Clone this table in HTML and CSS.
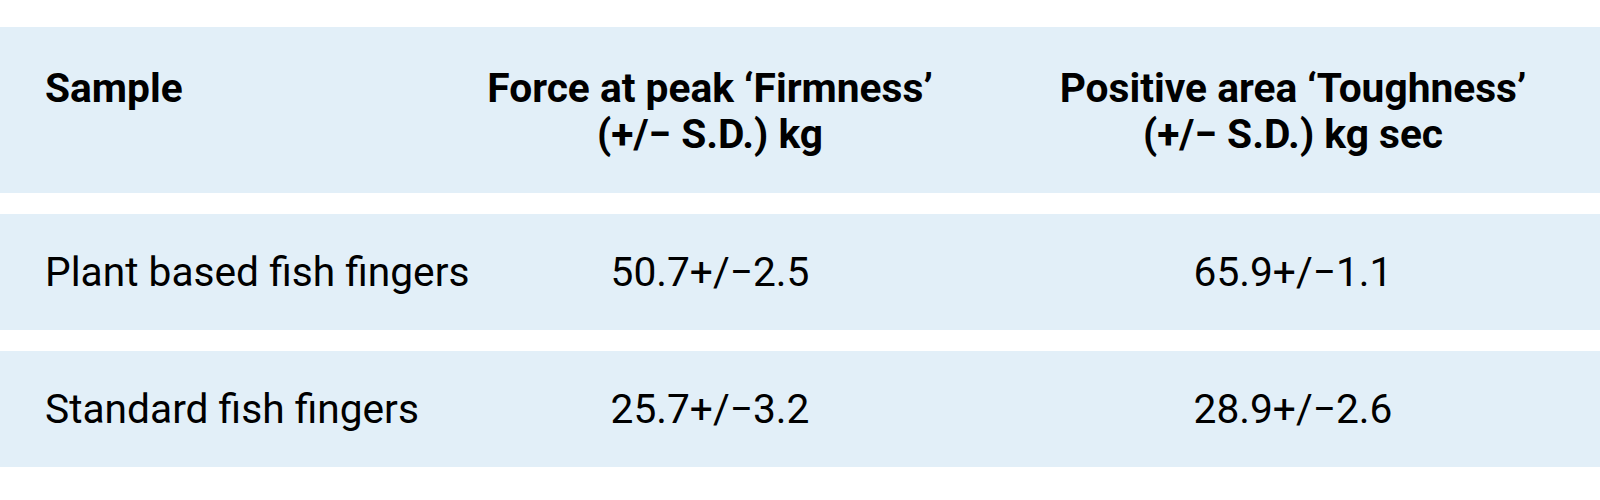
FILE: index.html
```html
<!DOCTYPE html>
<html lang="en">
<head>
<meta charset="utf-8">
<title>Texture analysis</title>
<link rel="stylesheet" href="styles.css">
</head>
<body>
<div class="table">
  <div class="row head">
    <div class="cell first">Sample</div>
    <div class="cell">Force at peak ‘Firmness’<br>(+/− S.D.) kg</div>
    <div class="cell">Positive area ‘Toughness’<br>(+/− S.D.) kg sec</div>
  </div>
  <div class="row body">
    <div class="cell first">Plant based fish fingers</div>
    <div class="cell">50.7+/−2.5</div>
    <div class="cell">65.9+/−1.1</div>
  </div>
  <div class="row body">
    <div class="cell first">Standard fish fingers</div>
    <div class="cell">25.7+/−3.2</div>
    <div class="cell">28.9+/−2.6</div>
  </div>
</div>
</body>
</html>
```

FILE: styles.css
```css
html, body {
  margin: 0;
  padding: 0;
  background: #ffffff;
}
body {
  padding-top: 27px;
  font-family: Roboto, "Liberation Sans", sans-serif;
  color: #000;
}
.table {
  display: flex;
  flex-direction: column;
  gap: 21px;
}
.row {
  display: grid;
  grid-template-columns: 434px 552px 1fr;
  background: #e2eff8;
  font-size: 40.7px;
  line-height: 46px;
}
.head {
  font-weight: 700;
  padding: 38px 0 36px;
}
.body {
  padding: 35px 0;
}
.cell {
  text-align: center;
  white-space: nowrap;
}
.cell.first {
  text-align: left;
  padding-left: 45px;
}
```
